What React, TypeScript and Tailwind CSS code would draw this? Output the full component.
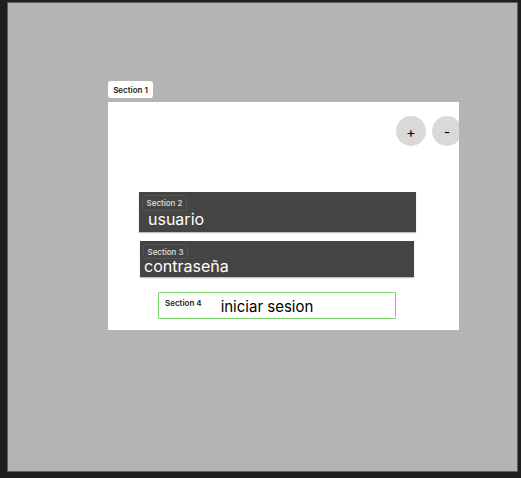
import React from "react";

export default function App() {
  return (
    <div
      className="w-[521px] h-[478px] bg-[#1e1e1e] pt-[2px] pl-[7px] overflow-hidden"
      style={{ fontFamily: "Inter, 'Noto Sans', sans-serif" }}
    >
      <div className="w-[511px] h-[470px] bg-[#b4b4b4] border border-[#5f5f5f] pl-[100px] pt-[78px]">
        <div className="w-[45px] h-[17px] rounded-[3px] bg-white flex items-center justify-center text-[8px] font-semibold text-[#222]">
          Section 1
        </div>
        <div className="mt-[4px] w-[351px] h-[228px] bg-white overflow-hidden">
          <div className="flex gap-[6px] pl-[288px] pt-[14px]">
            <div className="w-[30px] h-[30px] shrink-0 rounded-full bg-[#d9d9d9] flex items-center justify-center text-[14px] text-black">
              +
            </div>
            <div className="w-[30px] h-[30px] shrink-0 rounded-full bg-[#d9d9d9] flex items-center justify-center text-[14px] text-black">
              -
            </div>
          </div>
          <div className="ml-[31px] mt-[46px] w-[277px] h-[40px] bg-[#444444] pt-[3px] pl-[3px] shadow-[0_1px_1px_rgba(0,0,0,0.25)]">
            <div className="w-[45px] h-[16px] rounded-[3px] border border-[#555] flex items-center justify-center text-[8px] font-medium text-[#e0e0e0]">
              Section 2
            </div>
            <div className="ml-[6px] -mt-[1px] text-[16px] leading-[18px] text-white">usuario</div>
          </div>
          <div className="ml-[32px] mt-[9px] w-[274px] h-[36px] bg-[#444444] pt-[3px] pl-[3px] shadow-[0_1px_1px_rgba(0,0,0,0.25)]">
            <div className="w-[45px] h-[15px] rounded-[3px] border border-[#555] flex items-center justify-center text-[8px] font-medium text-[#e0e0e0]">
              Section 3
            </div>
            <div className="ml-[1px] -mt-[1px] text-[16px] leading-[17px] text-white">contraseña</div>
          </div>
          <div className="ml-[50px] mt-[15px] w-[238px] h-[27px] bg-white border border-[#7ed56f] rounded-[1px] flex items-center">
            <div className="ml-[6px] -mt-[5px] text-[8px] font-semibold text-[#222]">Section 4</div>
            <div className="ml-[19px] mt-[3px] text-[15px] text-black">iniciar sesion</div>
          </div>
        </div>
      </div>
    </div>
  );
}
